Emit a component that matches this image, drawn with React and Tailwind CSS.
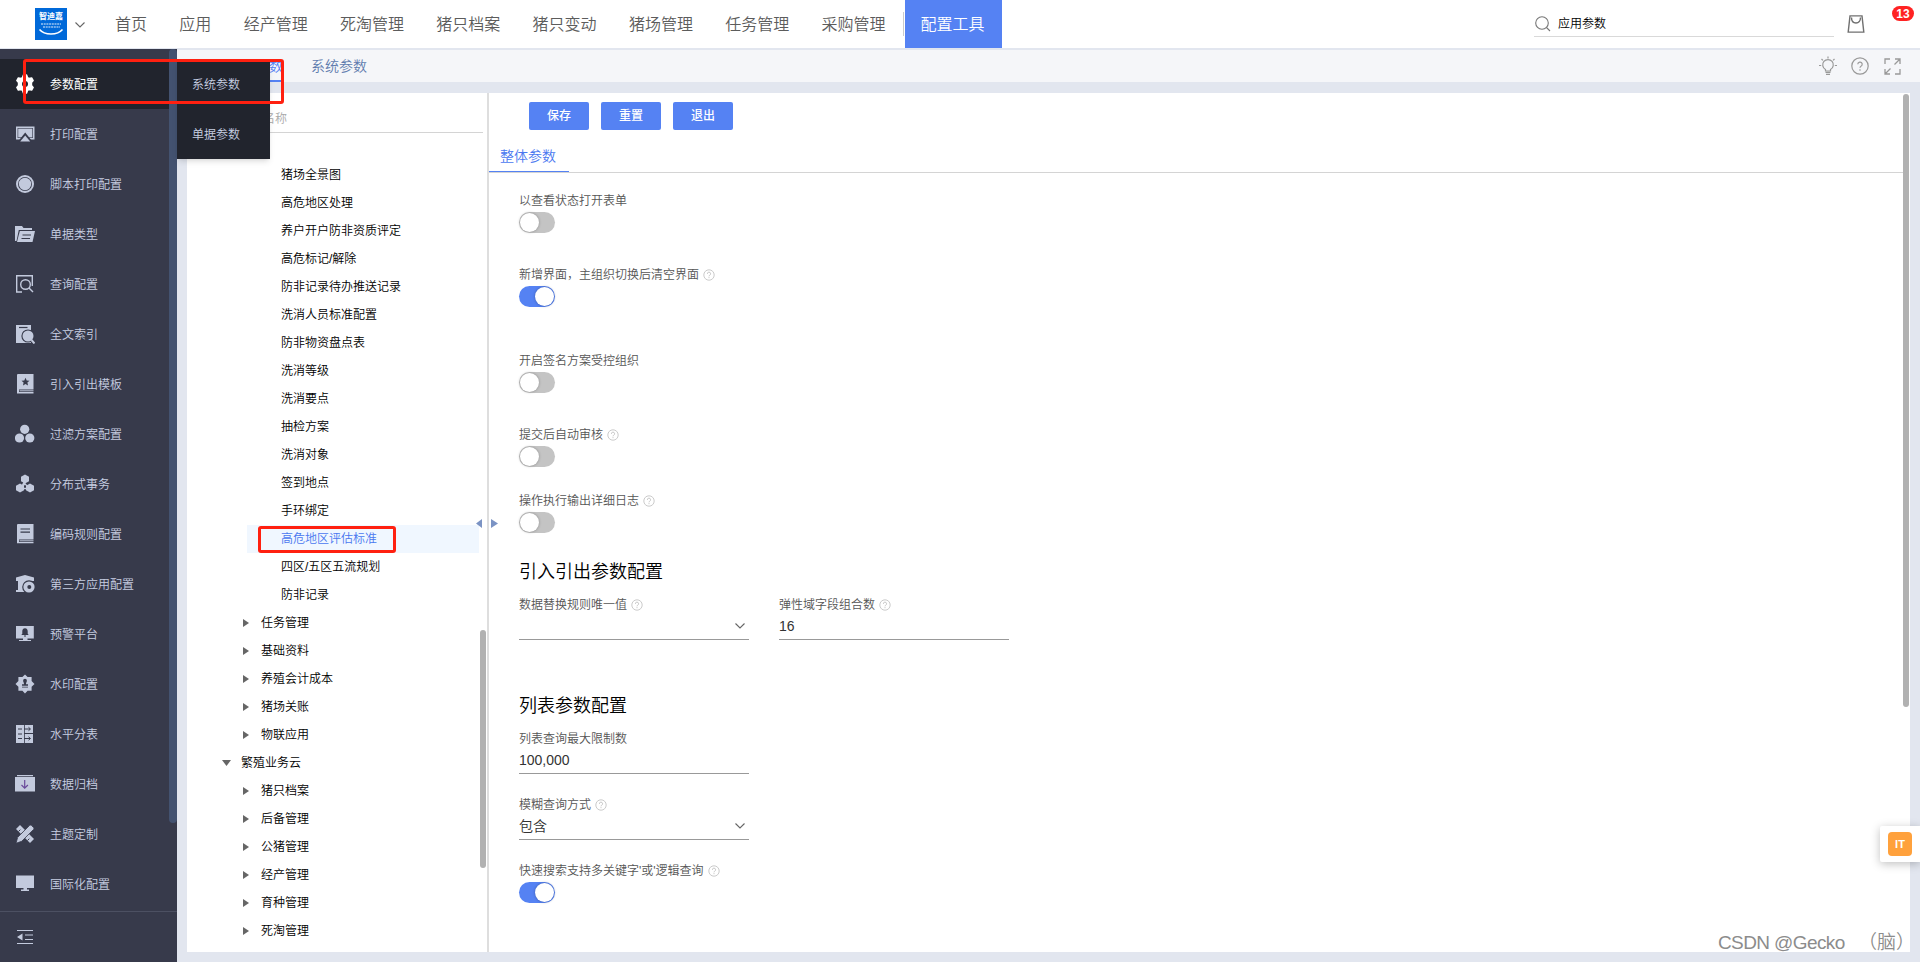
import React from "react";
import clsx from "clsx";

const navItems = [
  "首页",
  "应用",
  "经产管理",
  "死淘管理",
  "猪只档案",
  "猪只变动",
  "猪场管理",
  "任务管理",
  "采购管理",
];

const DARK = "#373a4b";

const sideIcons = {
  gear: (
    <>
      <path
        d="M7.600 3.600L8.500 1h3l.9 2.600 1.500.9 2.700-.5 1.500 2.600L16.400 8.600v2.800l1.700 2-1.500 2.600-2.700-.5-1.500.9-.9 2.600h-3l-.9-2.600-1.500-.9-2.700.5-1.500-2.600 1.700-2V8.600l-1.700-2L3.400 4l2.700.5z"
        stroke="#fff"
        strokeWidth="1.600"
        strokeLinejoin="round"
      />
      <circle cx="10" cy="10" r="3" fill="#21242d" />
    </>
  ),
  print: (
    <>
      <path d="M1 2.500h18.500v13H1z" />
      <path d="M2.600 4h15.300v10H2.600z" fill={DARK} />
      <path d="M3.200 4.600h14.100v8.800H3.200z" />
      <path d="M10.200 8.500l7 8.700H3.200z" fill={DARK} />
      <path d="M10.200 11.500l5 6H5.200z" />
    </>
  ),
  circle: (
    <>
      <circle cx="10" cy="10" r="9" />
      <circle cx="10" cy="10" r="7" fill={DARK} />
      <circle cx="10" cy="10" r="6.200" />
    </>
  ),
  folder: (
    <>
      <path d="M0 17V2h7l1.500 2H17v2H3.800L1.500 17z" />
      <path d="M4.800 7H20l-2.500 11H2z" />
      <path d="M7.500 11h8.500M6.500 14.500h8.500" stroke={DARK} strokeWidth="1.200" />
    </>
  ),
  query: (
    <g fill="none" stroke="#c3cadd" strokeWidth="1.400">
      <path d="M7 18H1.700V1.700h15.600V12" />
      <circle cx="10.500" cy="10.500" r="4.800" />
      <path d="M14 14l4 4" />
    </g>
  ),
  fulltext: (
    <>
      <path d="M1 1h15v18H1z" />
      <path d="M4 3.500h8.500" stroke={DARK} strokeWidth="1.200" />
      <circle cx="13" cy="12" r="6.600" fill={DARK} />
      <circle cx="13" cy="12" r="5.500" />
      <path d="M16.500 16l3 3.500" stroke="#c3cadd" strokeWidth="2" />
    </>
  ),
  template: (
    <>
      <path d="M2 1a1 1 0 0 1 1-1h15.500v15.500H4V18h14.500v1.500H2z" />
      <path d="M4.500 16.300h14v1h-14z" />
      <path
        d="M10.500 3.800l1.200 2.600 2.800.3-2.100 1.900.6 2.800-2.500-1.400L8 11.400l.6-2.800-2.100-1.900 2.800-.3z"
        fill={DARK}
      />
    </>
  ),
  filter: (
    <>
      <circle cx="9.700" cy="5.300" r="4.600" />
      <circle cx="4.500" cy="14" r="4.600" />
      <circle cx="14.800" cy="14" r="4.600" />
    </>
  ),
  nodes: (
    <>
      <path
        d="M10 5v5L5 14.500M10 10l5 4.500M5 14.500h10"
        stroke="#c3cadd"
        strokeWidth="1.300"
      />
      <path d="M10 .5l4 2.200v4.600l-4 2.200-4-2.200V2.700z" />
      <path d="M5 9.500l4 2.200v4.600l-4 2.200-4-2.200v-4.600z" />
      <path d="M15 9.500l4 2.200v4.600l-4 2.200-4-2.200v-4.600z" />
    </>
  ),
  rules: (
    <>
      <path d="M2 1a1 1 0 0 1 1-1h15.500v15.500H4V18h14.500v1.200H2z" />
      <path d="M4.500 16.300h14v1h-14z" />
      <path d="M5.500 5h9.500M5.500 8.200h9.500" stroke={DARK} strokeWidth="1.200" />
    </>
  ),
  thirdParty: (
    <>
      <path d="M1 3.500L10 1l9 2.500V7H1zM3 7h14v9H3zM1 16h9v2H1z" />
      <circle cx="14" cy="13" r="6.800" fill={DARK} />
      <circle cx="14" cy="13" r="5.600" />
      <circle cx="14.300" cy="13" r="2" fill={DARK} />
    </>
  ),
  alert: (
    <>
      <path d="M1 2h17.800v12.500H1zM8 14.500h4.500V16H16v1H4v-1h4z" />
      <path
        d="M10 4.200c2 0 2.700 1.500 2.700 3v2.500l1 1.300H6.300l1-1.300V7.200c0-1.500.7-3 2.700-3zM9 11.500h2v1H9z"
        fill={DARK}
      />
    </>
  ),
  stamp: (
    <>
      <path d="M10 .5l2.600 2.500h4v4L19.500 10l-2.900 2.800v4h-4L10 19.500l-2.600-2.700h-4v-4L.5 10l2.900-3V3h4z" />
      <path
        d="M10 4.800a1.900 1.900 0 0 1 1.900 1.900c0 1.100-.9 1.600-.9 3.600h2v1.500H7v-1.500h2c0-2-.9-2.500-.9-3.600A1.900 1.900 0 0 1 10 4.800zM7 12.700h6v.9H7z"
        fill={DARK}
      />
    </>
  ),
  split: (
    <>
      <path d="M1 1h8v18H1zM9.800 1H18v8H9.800zM9.800 10H18v9H9.800z" />
      <path
        d="M3 5h4M3 10h4M3 14.500h4M9 5h6M9 14.500h6M13.500 3.300L15.500 5l-2 1.700M13.500 12.800l2 1.700-2 1.700"
        stroke={DARK}
        strokeWidth="1"
        fill="none"
      />
    </>
  ),
  archive: (
    <>
      <path d="M2 1h16v1.200H2zM0 3h20v14.500H0z" />
      <path d="M9.700 6v8M6.500 11l3.200 3.200 3.200-3.200" stroke="#6a4a9a" strokeWidth="1.200" fill="none" />
    </>
  ),
  theme: (
    <>
      <path d="M1 5l4-4 14 14-4 4z" />
      <path d="M3.500 7.500l1.800-1.800M6 10l1.800-1.800M12.500 16.500l1.800-1.800" stroke={DARK} strokeWidth="1" />
      <path d="M1 19.300l1.700-6L14.500 1.500a1.500 1.500 0 0 1 2 0l2 2a1.500 1.500 0 0 1 0 2L6.700 17.300z" stroke={DARK} strokeWidth=".8" />
    </>
  ),
  screen: <path d="M1 1.500h18V14H1zM8.500 14h3.500v1.500h2V17H6v-1.500h2.500z" />,
};

const sideItems = [
  { title: "参数配置", icon: "gear", active: true },
  { title: "打印配置", icon: "print" },
  { title: "脚本打印配置", icon: "circle" },
  { title: "单据类型", icon: "folder" },
  { title: "查询配置", icon: "query" },
  { title: "全文索引", icon: "fulltext" },
  { title: "引入引出模板", icon: "template" },
  { title: "过滤方案配置", icon: "filter" },
  { title: "分布式事务", icon: "nodes" },
  { title: "编码规则配置", icon: "rules" },
  { title: "第三方应用配置", icon: "thirdParty" },
  { title: "预警平台", icon: "alert" },
  { title: "水印配置", icon: "stamp" },
  { title: "水平分表", icon: "split" },
  { title: "数据归档", icon: "archive" },
  { title: "主题定制", icon: "theme" },
  { title: "国际化配置", icon: "screen" },
];

const treeItems = [
  { title: "猪场全景图", level: 3 },
  { title: "高危地区处理", level: 3 },
  { title: "养户开户防非资质评定", level: 3 },
  { title: "高危标记/解除", level: 3 },
  { title: "防非记录待办推送记录", level: 3 },
  { title: "洗消人员标准配置", level: 3 },
  { title: "防非物资盘点表", level: 3 },
  { title: "洗消等级", level: 3 },
  { title: "洗消要点", level: 3 },
  { title: "抽检方案", level: 3 },
  { title: "洗消对象", level: 3 },
  { title: "签到地点", level: 3 },
  { title: "手环绑定", level: 3 },
  { title: "高危地区评估标准", level: 3, selected: true },
  { title: "四区/五区五流规划", level: 3 },
  { title: "防非记录", level: 3 },
  { title: "任务管理", level: 2 },
  { title: "基础资料", level: 2 },
  { title: "养殖会计成本", level: 2 },
  { title: "猪场关账", level: 2 },
  { title: "物联应用", level: 2 },
  { title: "繁殖业务云", level: 1 },
  { title: "猪只档案", level: 2 },
  { title: "后备管理", level: 2 },
  { title: "公猪管理", level: 2 },
  { title: "经产管理", level: 2 },
  { title: "育种管理", level: 2 },
  { title: "死淘管理", level: 2 },
];

const ChevronDown = ({ className }) => (
  <svg
    width="10"
    height="6"
    viewBox="0 0 10 6"
    fill="none"
    stroke="#666"
    strokeWidth="1.100"
    className={className}
  >
    <path d="M.5.5L5 5l4.500-4.500" />
  </svg>
);

const HelpIcon = () => (
  <svg
    width="12"
    height="12"
    viewBox="0 0 12 12"
    fill="none"
    stroke="#c4c4c4"
    className="ml-[4px]"
  >
    <circle cx="6" cy="6" r="5.200" strokeWidth=".9" />
    <path d="M4.400 4.800a1.600 1.600 0 1 1 2.300 1.400c-.5.300-.7.500-.7 1.100M6 8.200v1" />
  </svg>
);

const Header = () => (
  <header className="flex h-12 shrink-0 items-center bg-white">
    <div className="ml-[35px] flex h-8 w-8 flex-col items-center bg-[#0069d9] text-white">
      <span className="mt-[3px] h-[11px] text-[8px] leading-[11px] font-bold">智迪嘉</span>
      <svg width="26" height="14" viewBox="0 0 26 14" fill="none" stroke="#fff">
        <path d="M3 2h20M5 5h17" strokeWidth="1.500" strokeDasharray="2 .7" opacity=".6" />
        <path d="M1.500 7.500c5 6 18 6 23 0" strokeWidth="1.500" />
      </svg>
    </div>
    <ChevronDown className="mt-px ml-[8px]" />
    <nav className="ml-[30px] flex gap-[32.3px] pt-[2px] text-[16px] text-[#5c5c5c]">
      {navItems.map((item) => (
        <span key={item}>{item}</span>
      ))}
    </nav>
    <div className="ml-[17.5px] h-6 w-px bg-[#ccc]" />
    <div className="ml-px flex h-12 w-[97px] items-center justify-center bg-[#5582f3] pt-[2px] pr-[2px] text-[16px] text-white">
      配置工具
    </div>
    <div className="ml-auto flex h-[26px] w-[300px] items-center border-b border-[#d9d9d9]">
      <svg width="16" height="16" viewBox="0 0 16 16" fill="none" stroke="#777" strokeWidth="1.100" className="ml-px">
        <circle cx="7" cy="7" r="6.300" />
        <path d="M11.500 11.500l3.500 3.500" />
      </svg>
      <span className="ml-[7px] text-[12px] text-black">应用参数</span>
    </div>
    <svg width="18" height="18" viewBox="0 0 18 18" fill="none" stroke="#707070" strokeWidth="1.400" className="ml-[13px]">
      <path d="M3 .9h12l1.800 16.200H1.200z" />
      <path d="M4.500 2.500c0 3.200 1.800 5.500 4.500 5.500s4.500-2.300 4.500-5.500" />
    </svg>
    <span className="mr-[6px] mb-[21px] ml-[27px] flex h-[15px] w-[22px] items-center justify-center rounded-full bg-[#ff2323] text-[12px] font-bold text-white">
      13
    </span>
  </header>
);

const Sidebar = () => (
  <aside className="-mt-px flex w-[177px] shrink-0 flex-col bg-[#373a4b]">
    <div className="flex h-[862px] shrink-0">
      <ul className="w-[169px] pt-[10px]">
        {sideItems.map((item) => (
          <li
            key={item.title}
            className={clsx(
              "flex h-[50px] items-center pl-[15px] text-[12px]",
              item.active ? "bg-[#21242d] font-normal text-white" : "text-[#c8cfe2]",
            )}
          >
            <svg
              width="20"
              height="20"
              viewBox="0 0 20 20"
              fill={item.active ? "#fff" : "#c3cadd"}
            >
              {sideIcons[item.icon]}
            </svg>
            <span className="ml-[15px] pt-[2px]">{item.title}</span>
          </li>
        ))}
      </ul>
      <div className="h-[774px] w-2 rounded bg-[#435270]" />
    </div>
    <div className="flex grow items-center border-t border-[#4c5062] pl-[16px]">
      <svg width="18" height="16" viewBox="0 0 18 16" fill="#c3cadd">
        <path d="M1 1h16v1H1zM9 5.500h8v1H9zM9 10h8v1H9zM1 14h16v1H1zM1 8l5.500-3.500v7z" />
      </svg>
    </div>
  </aside>
);

const TabBar = () => (
  <div className="flex h-8 shrink-0 items-center bg-[#f5f6f9] text-[14px]">
    <svg width="16" height="15" viewBox="0 0 16 15" fill="none" stroke="#999" className="ml-[19px]">
      <path d="M.7 7.500L8 .7l7.300 6.800M3 6v8h10V6" />
    </svg>
    <span className="ml-[15px] flex h-8 items-center border-b-2 border-[#5582f3] pt-[2px] text-[#5582f3]">
      应用参数
    </span>
    <span className="ml-[28px] text-[#5f7cae]">系统参数</span>
    <div className="mr-[19px] ml-auto flex items-center gap-[14px]">
      <svg width="20" height="20" viewBox="0 0 20 20" fill="none" stroke="#999" strokeWidth="1.200">
        <path d="M7.500 15v-1.500a5.300 5.300 0 1 1 5 0V15z" />
        <path d="M7.500 16.300h5M8 18.400h4M10 .5v2M1 9.500h2.200M16.800 9.500H19M3.500 3l1.400 1.400M16.500 3l-1.400 1.400" />
      </svg>
      <svg width="18" height="18" viewBox="0 0 18 18" fill="none" stroke="#999" strokeWidth="1.200" className="-ml-px">
        <circle cx="9" cy="9" r="8.200" />
        <path d="M6.800 7.300A2.200 2.200 0 1 1 10 9.200c-.7.400-1 .8-1 1.600M9 12.300v1.500" />
      </svg>
      <svg width="17" height="17" viewBox="0 0 17 17" fill="none" stroke="#999" strokeWidth="1.300" className="ml-[1px]">
        <path d="M6 1H1v5M16 11v5h-5M11 1h5v5M6 16H1v-5M15.500 1.500L10.500 6.500M1.500 15.500l5-5" />
      </svg>
    </div>
  </div>
);

const TreeRow = ({ item }) => (
  <li
    className={clsx(
      "flex h-7 items-center text-[12px]",
      item.level === 1 && "ml-[35px] gap-[10px]",
      item.level === 2 && "ml-[56px] gap-[12px]",
      item.level === 3 && "mr-px ml-[60px] pl-[34px]",
      item.selected ? "bg-[#f0f7ff] text-[#4a78f0]" : "text-black",
    )}
  >
    {item.level === 1 && (
      <svg width="9" height="6" viewBox="0 0 9 6" fill="#666">
        <path d="M0 0h9L4.500 6z" />
      </svg>
    )}
    {item.level === 2 && (
      <svg width="6" height="8" viewBox="0 0 6 8" fill="#666">
        <path d="M0 0l6 4-6 4z" />
      </svg>
    )}
    <span>{item.title}</span>
  </li>
);

const Tree = () => (
  <div className="flex w-[300px] shrink-0 flex-col">
    <div className="mr-[4px] ml-[14px] flex h-10 items-end border-b border-[#d4d4d4]">
      <span className="mb-[4px] ml-[26px] text-[12px] text-[#a8a8a8]">请输入名称</span>
    </div>
    <div className="flex pt-[28px]">
      <ul className="w-[293px] shrink-0">
        {treeItems.map((item, i) => (
          <TreeRow key={i} item={item} />
        ))}
      </ul>
      <div className="mt-[469px] h-[238px] w-[6px] shrink-0 rounded-full bg-[#b1b1b1]" />
    </div>
  </div>
);

const Field = ({ label, help, className, children }) => (
  <div className={className}>
    <div className="flex h-5 items-center text-[12px] text-[#555]">
      {label}
      {help && <HelpIcon />}
    </div>
    {children}
  </div>
);

const Toggle = ({ on }) => (
  <div
    className={clsx(
      "mt-px flex h-[21px] w-9 items-center rounded-full px-px",
      on ? "justify-end bg-[#5582f3]" : "bg-[#c4c4c4]",
    )}
  >
    <span className="h-[19px] w-[19px] rounded-full bg-white shadow-[0_0_3px_rgba(0,0,0,0.3)]" />
  </div>
);

const Input = ({ value, select }) => (
  <div className="flex h-[25px] w-[230px] items-center justify-between border-b border-[#999] pr-[4px] pb-[2px] text-[14px] text-[#333]">
    <span>{value}</span>
    {select && <ChevronDown />}
  </div>
);

const Settings = () => (
  <div className="flex min-w-0 grow flex-col">
    <div className="flex gap-3 pt-[9px] pl-[40px]">
      {["保存", "重置", "退出"].map((text) => (
        <button
          key={text}
          className="h-7 w-[60px] rounded-[2px] bg-[#5582f3] text-[12px] font-medium text-white"
        >
          {text}
        </button>
      ))}
    </div>
    <div className="mr-[7px] flex h-[43px] items-end border-b border-[#d4d4d4]">
      <div className="flex h-[33px] w-20 items-center justify-center border-b border-[#5582f3] pt-[2px] pr-[2px] text-[14px] text-[#4a78f0]">
        整体参数
      </div>
    </div>
    <div className="pt-[18px] pl-[30px]">
      <Field label="以查看状态打开表单">
        <Toggle />
      </Field>
      <Field label="新增界面，主组织切换后清空界面" help className="mt-8">
        <Toggle on />
      </Field>
      <Field label="开启签名方案受控组织" className="mt-11">
        <Toggle />
      </Field>
      <Field label="提交后自动审核" help className="mt-8">
        <Toggle />
      </Field>
      <Field label="操作执行输出详细日志" help className="mt-6">
        <Toggle />
      </Field>

      <h2 className="mt-[25px] text-[18px] leading-7 text-black">引入引出参数配置</h2>
      <div className="mt-[9px] flex gap-[30px]">
        <Field label="数据替换规则唯一值" help>
          <Input value="" select />
        </Field>
        <Field label="弹性域字段组合数" help>
          <Input value="16" />
        </Field>
      </div>

      <h2 className="mt-[52px] text-[18px] leading-7 text-black">列表参数配置</h2>
      <Field label="列表查询最大限制数" className="mt-[9px]">
        <Input value="100,000" />
      </Field>
      <Field label="模糊查询方式" help className="mt-[21px]">
        <Input value="包含" select />
      </Field>
      <Field label="快速搜索支持多关键字'或'逻辑查询" help className="mt-[21px]">
        <Toggle on />
      </Field>
    </div>
  </div>
);

const Overlays = () => (
  <>
    <div className="absolute top-[59px] left-[177px] h-[100px] w-[93px] bg-[#21242d] text-[12px] text-[#c8cfe2] shadow-md">
      <div className="flex h-[50px] items-center pt-[2px] pl-[15px]">系统参数</div>
      <div className="flex h-[50px] items-center pt-[2px] pl-[15px]">单据参数</div>
    </div>
    <div className="absolute top-[59px] left-[23px] h-[45px] w-[261px] rounded-[3px] border-3 border-[#ff2010]" />
    <div className="absolute top-[526px] left-[258px] h-[27px] w-[138px] rounded-[3px] border-3 border-[#ff2010]" />
    <div className="absolute top-[519px] left-[476px] flex gap-[9px]">
      <svg width="6" height="9" viewBox="0 0 6 9" fill="#7b93c4">
        <path d="M6 0v9L0 4.500z" />
      </svg>
      <svg width="7" height="9" viewBox="0 0 7 9" fill="#7b93c4">
        <path d="M0 0v9l7-4.500z" />
      </svg>
    </div>
    <div className="absolute top-[94px] left-[1903px] h-[613px] w-[6px] rounded-full bg-[#b1b1b1]" />
    <div className="absolute top-[826px] left-[1880px] flex h-9 w-10 items-center rounded-l-[2px] bg-white pl-2 shadow-[0_2px_10px_rgba(0,0,0,0.25)]">
      <span className="flex h-6 w-6 items-center justify-center rounded-[4px] bg-[#ffa13c] text-[11px] font-bold text-white">
        IT
      </span>
    </div>
    <div className="absolute top-[928px] left-[1718px] flex h-[30px] items-center text-[19px] whitespace-nowrap text-[#8c8c8c]">
      <span className="w-[140px] tracking-[-0.6px]">CSDN @Gecko</span>
      <span>（脑）</span>
    </div>
  </>
);

export default function App() {
  return (
    <div className="relative flex h-screen w-full flex-col overflow-hidden bg-[#e2e6ef] font-['Liberation_Sans','Noto_Sans_CJK_SC',sans-serif] font-[350]">
      <Header />
      <div className="flex min-h-0 grow pt-[2px]">
        <Sidebar />
        <main className="flex min-w-0 grow flex-col">
          <TabBar />
          <div className="mt-[11px] mr-[10px] mb-[10px] ml-[10px] flex min-h-0 grow overflow-hidden bg-white">
            <Tree />
            <div className="w-[2px] shrink-0 bg-[#dedede]" />
            <Settings />
          </div>
        </main>
      </div>
      <Overlays />
    </div>
  );
}
